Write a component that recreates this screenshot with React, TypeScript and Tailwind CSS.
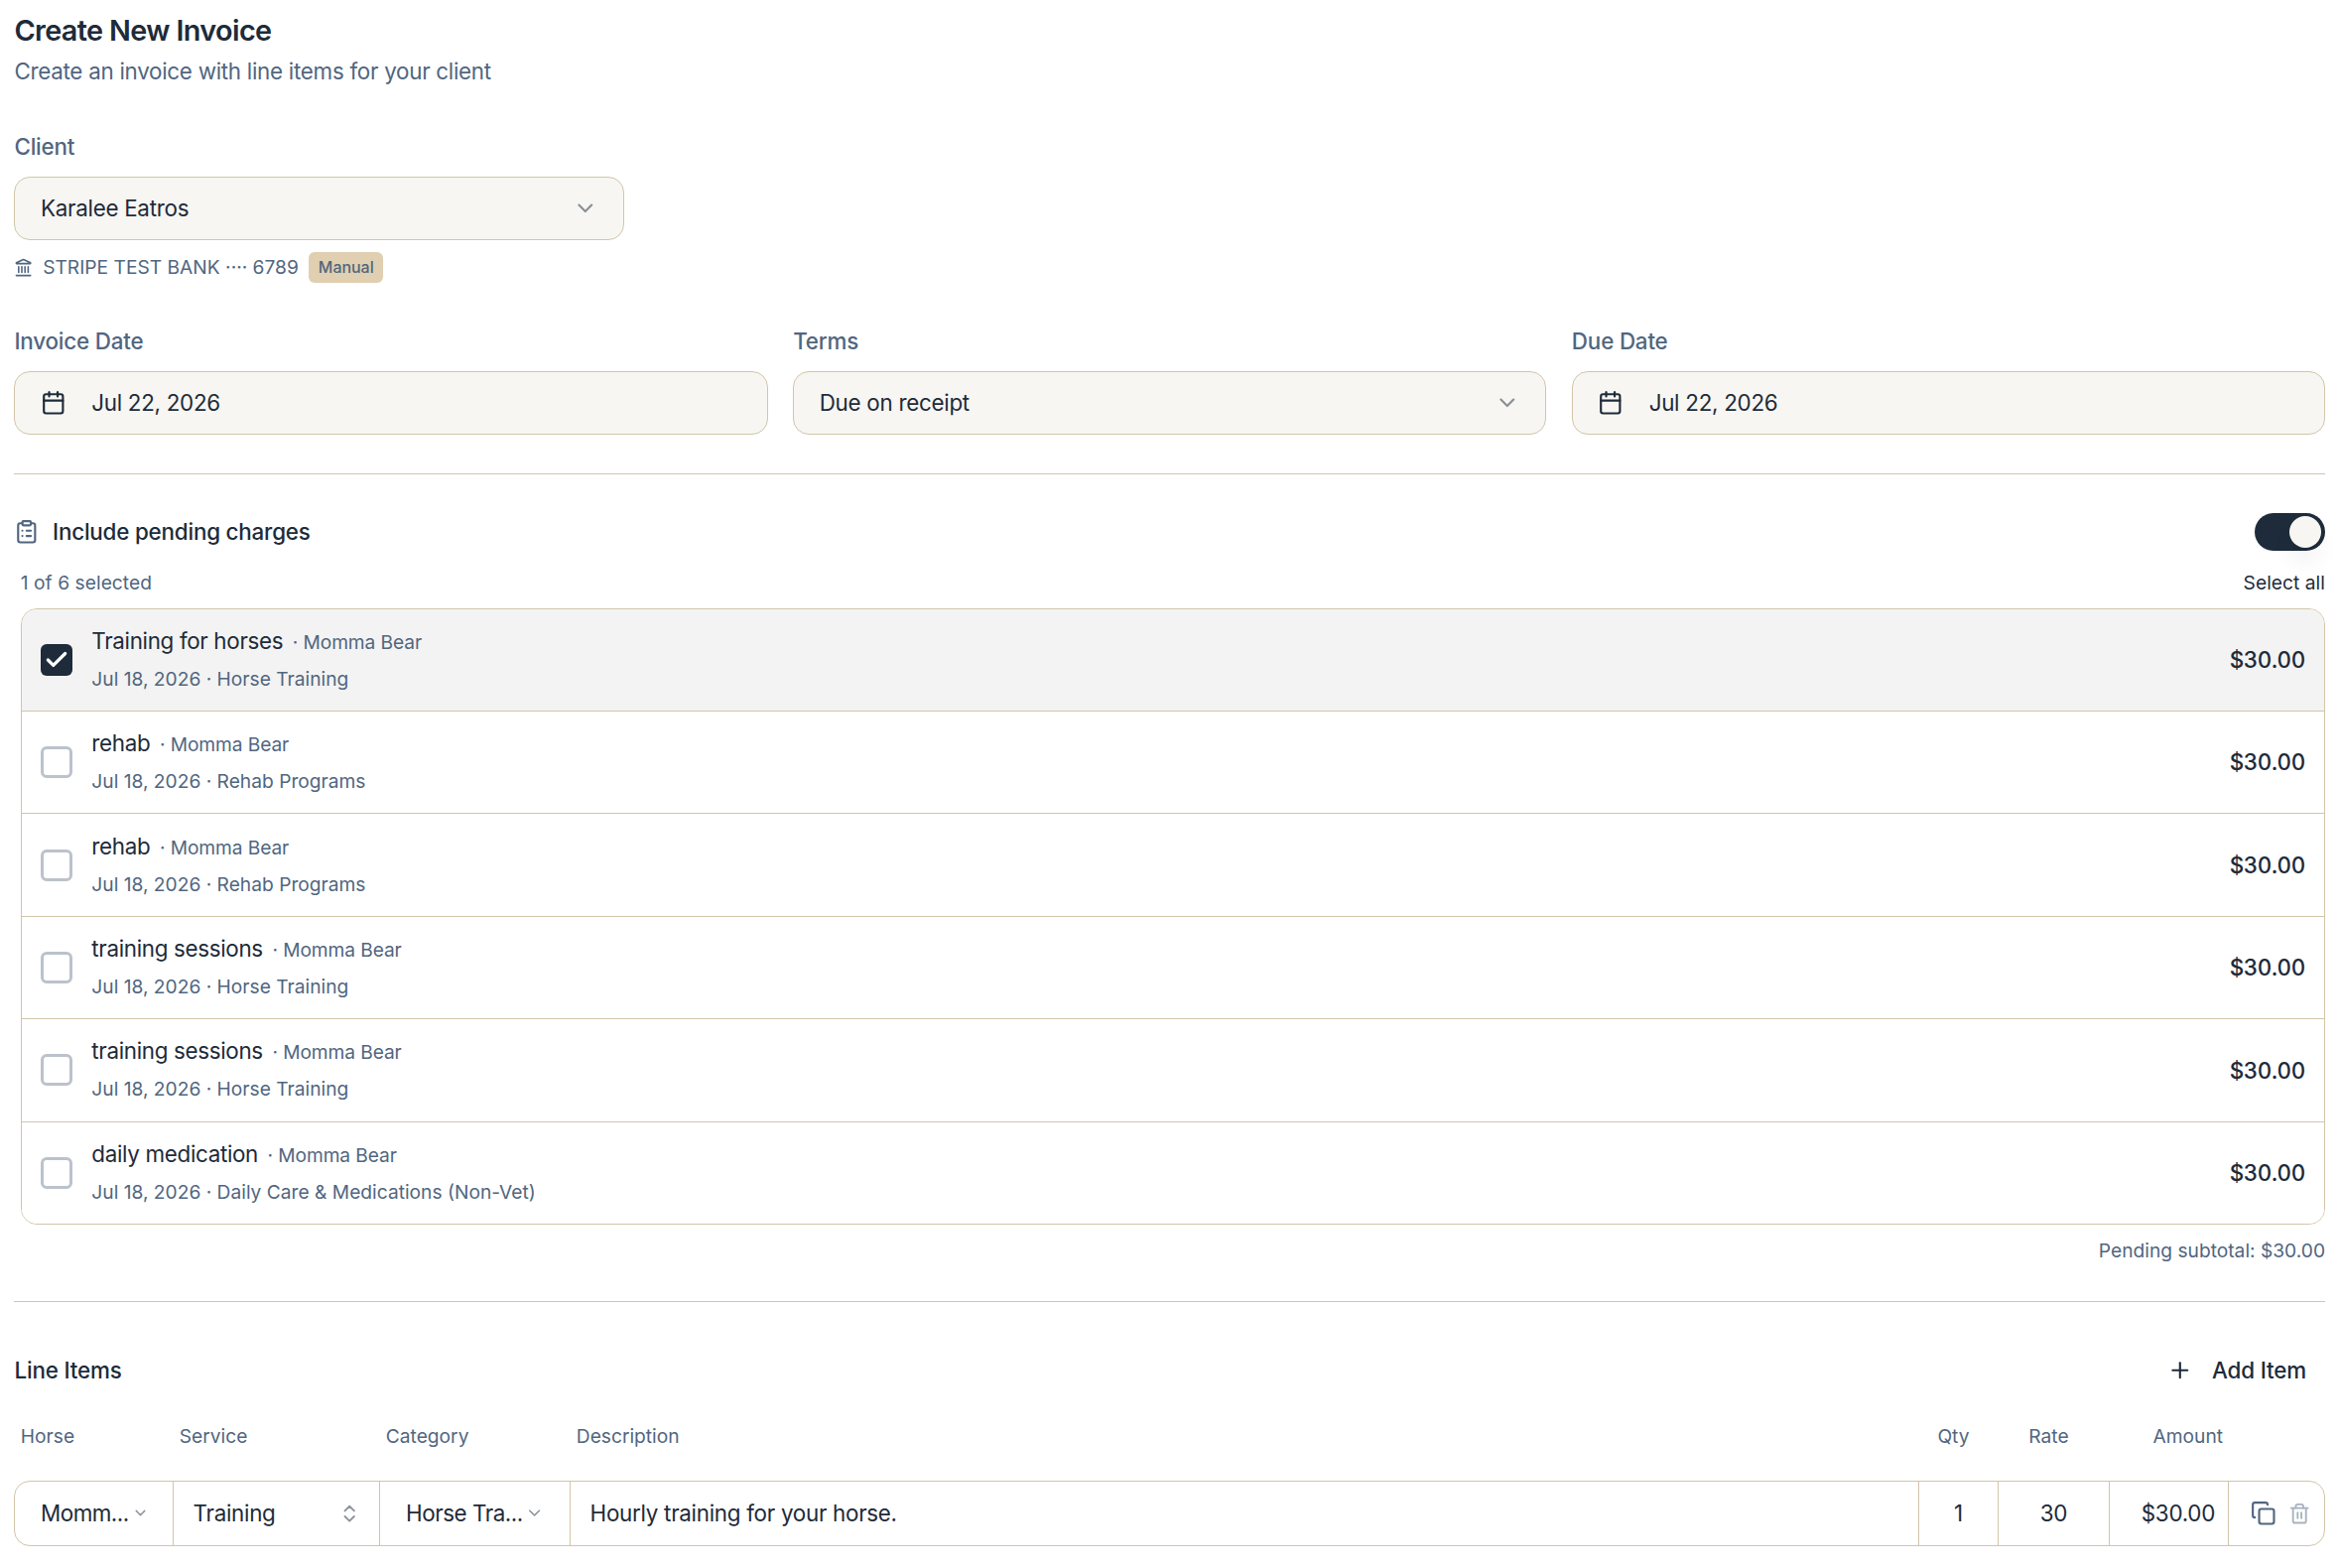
import React from 'react';
import { Calendar, Check, ChevronDown, ChevronsUpDown, ClipboardList, Copy, Landmark, Plus, Trash2 } from 'lucide-react';

const charges = [
  { name: 'Training for horses', horse: 'Momma Bear', date: 'Jul 18, 2026', category: 'Horse Training', checked: true },
  { name: 'rehab', horse: 'Momma Bear', date: 'Jul 18, 2026', category: 'Rehab Programs', checked: false },
  { name: 'rehab', horse: 'Momma Bear', date: 'Jul 18, 2026', category: 'Rehab Programs', checked: false },
  { name: 'training sessions', horse: 'Momma Bear', date: 'Jul 18, 2026', category: 'Horse Training', checked: false },
  { name: 'training sessions', horse: 'Momma Bear', date: 'Jul 18, 2026', category: 'Horse Training', checked: false },
  { name: 'daily medication', horse: 'Momma Bear', date: 'Jul 18, 2026', category: 'Daily Care & Medications (Non-Vet)', checked: false },
];

const Label: React.FC<{ children: React.ReactNode }> = ({ children }) => (
  <div className="h-8 leading-8 font-medium tracking-[-0.18px] text-[#51667f]">{children}</div>
);

const DateField: React.FC<{ label: string; value: string }> = ({ label, value }) => (
  <div>
    <Label>{label}</Label>
    <button className="mt-[14px] flex h-16 w-full items-center rounded-[16px] border border-[#d2c6a9] bg-[#f7f6f2] px-[25.6px]">
      <Calendar className="size-[25.6px]" strokeWidth={2} />
      <span className="ml-[25.6px]">{value}</span>
    </button>
  </div>
);

const SelectField: React.FC<{ label: string; value: string }> = ({ label, value }) => (
  <div>
    <Label>{label}</Label>
    <button className="mt-[14px] flex h-16 w-full items-center justify-between rounded-[16px] border border-[#d2c6a9] bg-[#f7f6f2] px-[25.6px]">
      <span>{value}</span>
      <ChevronDown className="size-[25.6px] opacity-50" strokeWidth={2} />
    </button>
  </div>
);

const PendingCharges: React.FC = () => (
  <section>
    <div className="flex h-[38px] items-center justify-between">
      <div className="flex items-center font-medium tracking-[-0.2px]">
        <ClipboardList className="size-[25.6px] text-[#51667f]" />
        <span className="ml-[13px]">Include pending charges</span>
      </div>
      <button className="flex h-[38px] w-[71px] items-center justify-end rounded-full bg-[#1e2b3a] pr-[4px]">
        <span className="size-8 rounded-full bg-[#f7f6f2] shadow-[0_16px_24px_-5px_rgba(0,0,0,0.1)]" />
      </button>
    </div>
    <div className="mt-[19px] flex h-[26px] items-center justify-between pl-[6.4px] text-[19.2px] tracking-[0.04px]">
      <span className="text-[#51667f]">1 of 6 selected</span>
      <span>Select all</span>
    </div>
    <div className="mt-[12.6px] ml-[6.6px] divide-y divide-[#d2c6a9] overflow-hidden rounded-[16px] border border-[#d2c6a9]">
      {charges.map((charge, i) => (
        <div
          key={i}
          className={`flex h-[103.4px] items-center px-[19.2px] last:h-[102.8px] ${charge.checked ? 'bg-[#f3f3f3]' : 'bg-white'}`}
        >
          {charge.checked ? (
            <span className="flex size-8 items-center justify-center rounded-[6px] bg-[#1e2b3a] text-white">
              <Check className="size-[26px]" strokeWidth={3} />
            </span>
          ) : (
            <span className="size-8 rounded-[6px] border-3 border-[#bbc2cc]" />
          )}
          <div className="ml-[19.2px] flex-1">
            <div className="h-8 leading-8 tracking-[-0.33px]">
              {charge.name}
              <span className="ml-[9.6px] text-[19.2px] tracking-[-0.1px] text-[#51667f]">· {charge.horse}</span>
            </div>
            <div className="mt-[6px] h-8 text-[19.2px] leading-8 tracking-normal text-[#51667f]">
              {charge.date} · {charge.category}
            </div>
          </div>
          <span className="font-medium tracking-[-0.4px] tabular-nums">$30.00</span>
        </div>
      ))}
    </div>
    <div className="mt-[13px] h-[26px] text-right text-[19.2px] leading-[26px] tracking-normal text-[#51667f]">
      Pending subtotal: $30.00
    </div>
  </section>
);

const LineItems: React.FC = () => (
  <section>
    <div className="flex h-[58px] items-center justify-between font-medium tracking-[-0.15px]">
      <span>Line Items</span>
      <button className="flex items-center pr-[19px]">
        <Plus className="size-[25.6px]" strokeWidth={2} />
        <span className="ml-[19.2px]">Add Item</span>
      </button>
    </div>
    <div className="mt-[25.2px] flex h-[26px] items-center text-[19.2px] tracking-normal text-[#51667f]">
      <span className="w-[160px] pl-[6.4px]">Horse</span>
      <span className="w-[208px] pl-[6.4px]">Service</span>
      <span className="w-[192px] pl-[6.4px]">Category</span>
      <span className="flex-1 pl-[6.4px]">Description</span>
      <span className="w-[80px] pr-[11px] text-center">Qty</span>
      <span className="w-[112px] pr-[11px] text-center">Rate</span>
      <span className="w-[120px] pr-[6px] text-right">Amount</span>
      <span className="w-[97px]" />
    </div>
    <div className="mt-[31.4px] flex h-[66px] divide-x divide-[#d2c6a9] rounded-[16px] border border-[#d2c6a9]">
      <div className="flex w-[160px] items-center pl-[25.6px]">
        <span className="tracking-[-0.5px]">Momm...</span>
        <ChevronDown className="ml-[3px] size-[17px] opacity-50" />
      </div>
      <div className="flex w-[208px] items-center justify-between pr-[19px] pl-[19.2px]">
        <span>Training</span>
        <ChevronsUpDown className="size-[22.4px] opacity-50" />
      </div>
      <div className="flex w-[192px] items-center pl-[25.6px]">
        <span className="tracking-[-0.45px]">Horse Tra...</span>
        <ChevronDown className="ml-[2px] size-[19.2px] opacity-50" />
      </div>
      <div className="flex flex-1 items-center pl-[19.2px]">Hourly training for your horse.</div>
      <div className="flex w-[80px] items-center justify-center">1</div>
      <div className="flex w-[112px] items-center justify-center">30</div>
      <div className="flex w-[120px] items-center justify-end pr-[13px]">$30.00</div>
      <div className="flex w-[96px] items-center pl-[22px]">
        <Copy className="size-[25.6px] text-[#51667f]" />
        <Trash2 className="ml-[12.4px] size-[22.4px] text-[#a8b3bf]" />
      </div>
    </div>
  </section>
);

const App: React.FC = () => {
  return (
    <main className="h-[1580px] w-[2358px] bg-white pt-[14px] pr-[15px] pl-[14.4px] font-['Inter',sans-serif] text-[22.4px] tracking-[-0.28px] text-[#1e2b3a]">
      <h1 className="h-[34px] text-[28.8px] leading-[34px] font-semibold tracking-[-0.62px]">Create New Invoice</h1>
      <p className="mt-[8px] h-8 leading-8 text-[#51667f]">Create an invoice with line items for your client</p>

      <div className="mt-[44px] w-[614.4px]">
        <SelectField label="Client" value="Karalee Eatros" />
      </div>
      <div className="mt-[12px] flex h-[31px] items-center text-[19.2px] tracking-normal text-[#51667f]">
        <Landmark className="size-[19.2px]" />
        <span className="ml-[9.6px]">STRIPE TEST BANK ···· 6789</span>
        <span className="ml-[10.4px] h-[31px] rounded-[6px] bg-[#e0cfb0] px-[9.6px] text-[16px] leading-[31px] font-medium tracking-[-0.05px]">
          Manual
        </span>
      </div>

      <div className="mt-[43px] grid grid-cols-3 gap-[25.6px]">
        <DateField label="Invoice Date" value="Jul 22, 2026" />
        <SelectField label="Terms" value="Due on receipt" />
        <DateField label="Due Date" value="Jul 22, 2026" />
      </div>

      <hr className="mt-[39px] mb-[39px] border-[#d2c6a9]" />
      <PendingCharges />
      <hr className="mt-[38px] mb-[39px] border-[#d2c6a9]" />
      <LineItems />
    </main>
  );
};

export default App;
